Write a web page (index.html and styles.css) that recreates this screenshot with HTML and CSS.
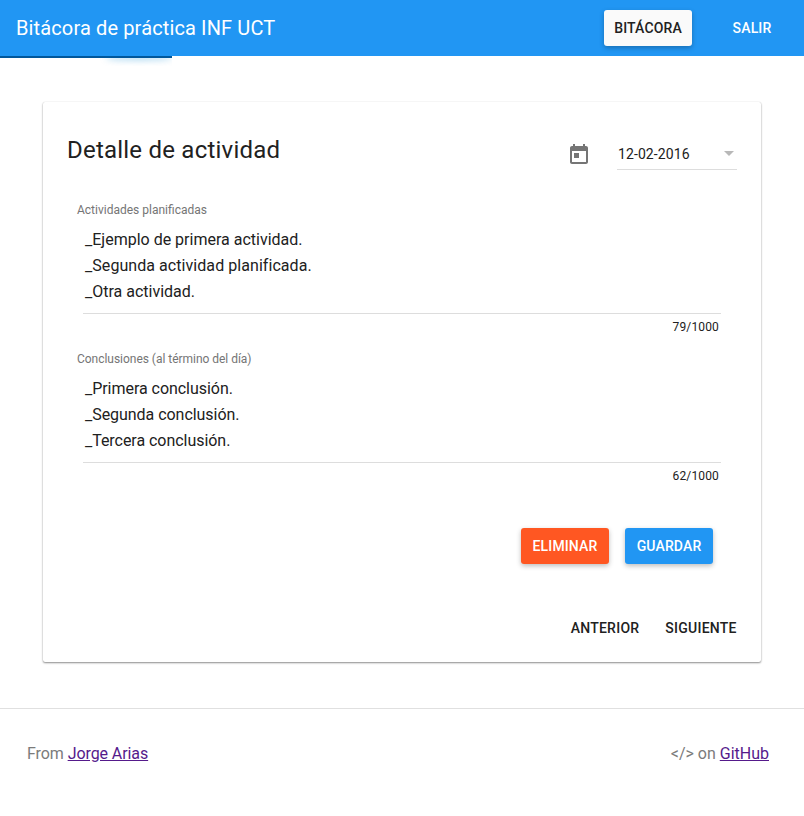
FILE: index.html
```html
<!DOCTYPE html>
<html lang="es">
<head>
<meta charset="utf-8">
<title>Bitácora de práctica INF UCT</title>
<link rel="stylesheet" href="styles.css">
</head>
<body>
<header class="toolbar">
  <h1 class="brand">Bitácora de práctica INF UCT</h1>
  <nav class="nav"><button class="btn raised light">Bitácora</button><button class="btn ghost">Salir</button></nav>
</header>
<div class="progress"><span class="peg"></span></div>
<main class="card">
  <div class="card-head">
    <h2 class="title">Detalle de actividad</h2>
    <svg class="calendar" width="24" height="24" viewBox="0 0 24 24"><path d="M19 3h-1V1h-2v2H8V1H6v2H5c-1.110 0-1.990.9-1.990 2L3 19c0 1.100.890 2 2 2h14c1.100 0 2-.9 2-2V5c0-1.100-.9-2-2-2zm0 16H5V8h14v11zM7 10h5v5H7z"/></svg>
    <div class="date"><span>12-02-2016</span><i class="arrow"></i></div>
  </div>
  <section class="field">
    <label>Actividades planificadas</label>
    <div class="text">_Ejemplo de primera actividad.<br><span class="wide">_Segunda actividad planificada.</span><br>_Otra actividad.</div>
    <div class="count">79/1000</div>
  </section>
  <section class="field conclusions">
    <label>Conclusiones (al término del día)</label>
    <div class="text">_Primera conclusión.<br>_Segunda conclusión.<br>_Tercera conclusión.</div>
    <div class="count">62/1000</div>
  </section>
  <div class="actions"><button class="btn raised danger">Eliminar</button><button class="btn raised primary">Guardar</button></div>
  <div class="pager"><button class="btn">Anterior</button><button class="btn">Siguiente</button></div>
</main>
<footer class="footer"><span>From <a href="#">Jorge Arias</a></span><span>&lt;/&gt; on <a href="#">GitHub</a></span></footer>
</body>
</html>
```
FILE: styles.css
```css
* { box-sizing: border-box; }
body { margin: 0; background: #fff; color: #212121; font-family: Roboto, sans-serif; font-size: 16px; }
h1, h2 { margin: 0; font-weight: 400; }
.toolbar { height: 56px; padding: 0 16px; background: #2196f3; color: #fff; display: flex; align-items: center; justify-content: space-between; }
.brand { font-size: 20px; letter-spacing: .13px; }
.nav { display: flex; gap: 16px; }
.btn { border: 0; border-radius: 3px; background: transparent; color: #212121; height: 36px; min-width: 88px; padding: 0; font: 500 14px/36px Roboto, sans-serif; text-transform: uppercase; letter-spacing: .14px; text-align: center; }
.raised { box-shadow: 0 2px 5px rgba(0,0,0,.26); }
.light { background: #fafafa; }
.ghost, .danger, .primary { color: #fff; }
.danger { background: #ff5722; }
.primary { background: #2196f3; }
.nav .ghost { margin-right: -8px; }
.progress { position: relative; width: 172px; height: 2px; background: #01579b; }
.peg { position: absolute; right: 0; top: 0; width: 66px; height: 2px; border-radius: 50%; box-shadow: 0 1px 6px 1px rgba(2,136,209,.4); clip-path: inset(0 0 -8px -10px); }
.card { width: 718px; height: 560px; margin: 44px auto 0; border-radius: 2px; box-shadow: 0 1px 2px rgba(0,0,0,.45), 0 0 1px rgba(0,0,0,.15); }
.card-head { height: 100px; padding: 32px 24px 0; display: flex; align-items: flex-start; }
.title { flex: 1; font-size: 24px; line-height: 32px; letter-spacing: .22px; }
.calendar { fill: #757575; margin: 9px 26px 0 0; }
.date { width: 120px; height: 36px; padding: 4px 3px 0 1px; border-bottom: 1px solid #ddd; display: flex; align-items: center; justify-content: space-between; font-size: 14px; letter-spacing: .1px; }
.arrow { border: 5px solid transparent; border-top-color: #b8b8b8; border-bottom: 0; }
.field { height: 149px; padding: 0 40px 0 34px; }
.field label { display: block; height: 25px; font-size: 12px; line-height: 16px; color: #757575; }
.text { height: 87px; margin-left: 6px; padding: 0 0 0 2px; border-bottom: 1px solid #ddd; line-height: 26px; }
.wide { letter-spacing: .06px; font-variant-ligatures: common-ligatures; }
.conclusions .text { letter-spacing: -.04px; }
.conclusions label { letter-spacing: -.03px; }
.count { padding: 5px 2px 0; font-size: 12px; line-height: 16px; letter-spacing: .15px; text-align: right; }
.actions { display: flex; justify-content: flex-end; gap: 16px; padding: 28px 48px 0; }
.pager { display: flex; justify-content: flex-end; gap: 6px; padding: 46px 16px 0; }
.pager .btn { letter-spacing: .25px; }
.pager .btn:first-child { margin-right: 2px; }
.footer { height: 108px; margin-top: 46px; border-top: 1px solid #e0e0e0; padding: 35px 35px 0 27px; display: flex; justify-content: space-between; color: #7b7b7b; line-height: 19px; }
.footer a { color: #551a8b; }
.footer span:first-child { letter-spacing: -.08px; }
```
